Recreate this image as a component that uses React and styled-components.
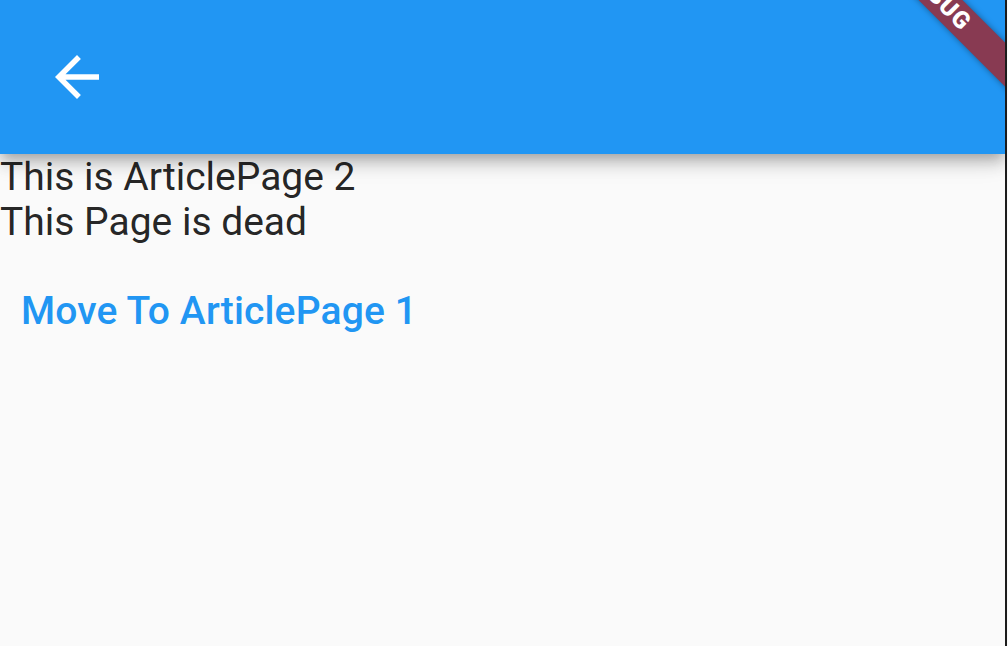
import React from "react";
import styled, { createGlobalStyle } from "styled-components";

const GlobalStyle = createGlobalStyle`
  html, body {
    margin: 0;
    padding: 0;
    background: #fafafa;
  }
  body {
    font-family: Roboto, "Noto Sans", sans-serif;
  }
`;

const Screen = styled.div`
  display: flex;
  flex-direction: row;
  width: 1008px;
  height: 646px;
  overflow: hidden;
`;

const Viewport = styled.div`
  position: relative;
  display: flex;
  flex-direction: column;
  width: 1005px;
  height: 100%;
  background: #fafafa;
  overflow: hidden;
`;

const Edge = styled.div`
  width: 2px;
  height: 100%;
  background: #1c1c1c;
`;

const AppBar = styled.header`
  position: relative;
  z-index: 2;
  display: flex;
  align-items: center;
  height: 154px;
  padding-left: 44px;
  background: #2196f3;
  box-shadow: 0 5px 11px -3px rgba(0, 0, 0, 0.2), 0 11px 14px rgba(0, 0, 0, 0.14),
    0 3px 28px rgba(0, 0, 0, 0.12);
  flex-shrink: 0;
`;

const IconButton = styled.button`
  display: flex;
  align-items: center;
  justify-content: center;
  width: 66px;
  height: 66px;
  padding: 0;
  border: none;
  background: transparent;
  cursor: pointer;
`;

const Body = styled.main`
  display: flex;
  flex-direction: column;
  align-items: flex-start;
  padding-top: 1px;
`;

const Line = styled.div`
  font-size: 39px;
  line-height: 45px;
  color: rgba(0, 0, 0, 0.87);
`;

const TextButton = styled.button`
  display: flex;
  align-items: center;
  height: 132px;
  padding: 0 21px;
  border: none;
  background: transparent;
  font-family: Roboto, "Noto Sans", sans-serif;
  font-size: 39px;
  font-weight: 500;
  letter-spacing: 0.15px;
  line-height: 45px;
  color: #2196f3;
  cursor: pointer;
`;

const DebugBanner = styled.div`
  position: absolute;
  z-index: 5;
  left: 808px;
  top: -18px;
  width: 260px;
  height: 31px;
  transform: rotate(45deg);
  background: #883a52;
  box-shadow: 0 0 6px rgba(0, 0, 0, 0.4);
  color: #ffffff;
  font-family: Roboto, "Noto Sans", sans-serif;
  font-weight: 900;
  font-size: 24px;
  line-height: 31px;
  letter-spacing: 1px;
  text-align: center;
`;

const BackArrow = () => (
  <svg width="66" height="66" viewBox="0 0 24 24" fill="#ffffff">
    <path d="M20 11H7.83l5.59-5.59L12 4l-8 8 8 8 1.41-1.41L7.83 13H20v-2z" />
  </svg>
);

const App = () => {
  return (
    <Screen>
      <GlobalStyle />
      <Viewport>
        <AppBar>
          <IconButton aria-label="Back">
            <BackArrow />
          </IconButton>
        </AppBar>
        <Body>
          <Line>This is ArticlePage 2</Line>
          <Line>This Page is dead</Line>
          <TextButton>Move To ArticlePage 1</TextButton>
        </Body>
        <DebugBanner>DEBUG</DebugBanner>
      </Viewport>
      <Edge />
    </Screen>
  );
};

export default App;
